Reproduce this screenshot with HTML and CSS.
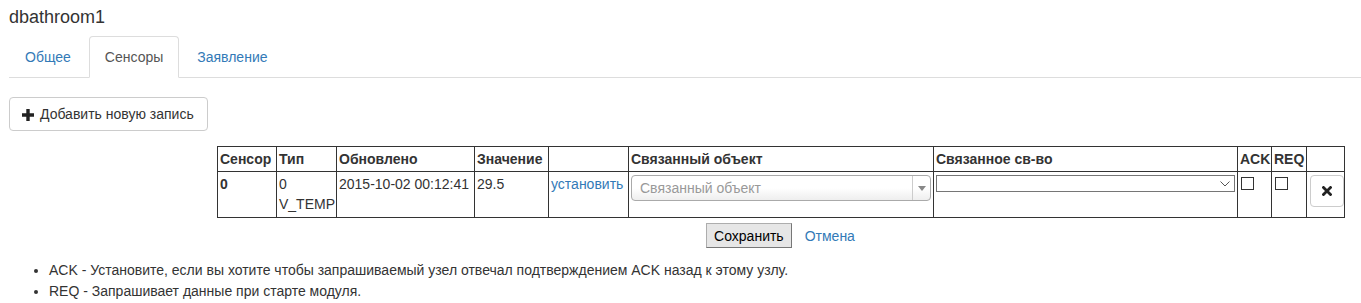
FILE: index.html
```html
<!DOCTYPE html>
<html lang="ru">
<head>
<meta charset="utf-8">
<link rel="stylesheet" href="styles.css">
</head>
<body>
<div class="page">
  <h4 class="title">dbathroom1</h4>
  <ul class="tabs">
    <li><a href="#">Общее</a></li>
    <li class="active"><a href="#">Сенсоры</a></li>
    <li><a href="#">Заявление</a></li>
  </ul>
  <div class="toolbar">
    <button class="btn add"><svg class="plus" width="12" height="12" viewBox="0 0 12 12"><path d="M4.3 0h3.4v4.3H12v3.4H7.7V12H4.3V7.7H0V4.3h4.3z" fill="#222"/></svg>Добавить новую запись</button>
  </div>
  <div class="grid-wrap">
    <table class="grid">
      <colgroup>
        <col class="c1"><col class="c2"><col class="c3"><col class="c4"><col class="c5"><col class="c6"><col class="c7"><col class="c8"><col class="c9"><col class="c10">
      </colgroup>
      <thead>
        <tr>
          <th>Сенсор</th><th>Тип</th><th>Обновлено</th><th>Значение</th><th></th><th>Связанный объект</th><th>Связанное св-во</th><th>ACK</th><th>REQ</th><th></th>
        </tr>
      </thead>
      <tbody>
        <tr>
          <td><b>0</b></td>
          <td>0<br>V_TEMP</td>
          <td>2015-10-02 00:12:41</td>
          <td>29.5</td>
          <td><a href="#">установить</a></td>
          <td><div class="s2"><span class="s2-text">Связанный объект</span><span class="s2-arrow"><i></i></span></div></td>
          <td><div class="nsel"><svg width="10" height="6" viewBox="0 0 10 6"><path d="M0.5 0.5 L5 5 L9.5 0.5" fill="none" stroke="#555" stroke-width="1"/></svg></div></td>
          <td><span class="cb"></span></td>
          <td><span class="cb"></span></td>
          <td><button class="btn del"><svg width="10" height="10" viewBox="0 0 10 10"><path d="M1.5 1.5L8.5 8.5M8.5 1.5L1.5 8.5" stroke="#222" stroke-width="2.8" stroke-linecap="square"/></svg></button></td>
        </tr>
      </tbody>
    </table>
    <div class="actions">
      <button class="save">Сохранить</button>
      <a href="#" class="cancel">Отмена</a>
    </div>
  </div>
  <ul class="notes">
    <li>ACK - Установите, если вы хотите чтобы запрашиваемый узел отвечал подтверждением ACK назад к этому узлу.</li>
    <li>REQ - Запрашивает данные при старте модуля.</li>
  </ul>
</div>
</body>
</html>
```
FILE: styles.css
```css
* { box-sizing: border-box; }
body {
  margin: 0;
  font-family: "Liberation Sans", Arial, sans-serif;
  font-size: 14px;
  line-height: 20px;
  color: #333;
  background: #fff;
}
a { color: #337ab7; text-decoration: none; }
.page { padding: 0 9px; }
.title {
  margin: 0;
  padding-top: 5px;
  font-size: 18px;
  font-weight: normal;
  line-height: 24px;
  color: #333;
  height: 36px;
}
.tabs {
  list-style: none;
  margin: 0;
  padding: 0;
  display: flex;
  border-bottom: 1px solid #ddd;
  margin-right: -9px;
}
.tabs li { margin-bottom: -1px; margin-right: 2px; }
.tabs a {
  display: block;
  padding: 10px 15px;
  line-height: 20px;
  border: 1px solid transparent;
  border-radius: 4px 4px 0 0;
}
.tabs .active a {
  color: #555;
  background: #fff;
  border-color: #ddd #ddd transparent #ddd;
}
.toolbar { padding-top: 19px; }
.btn {
  font-family: inherit;
  font-size: 14px;
  line-height: 20px;
  color: #333;
  background: #fff;
  border: 1px solid #ccc;
  border-radius: 4px;
  padding: 6px 12px;
  height: 34px;
}
.add { display: inline-flex; align-items: center; padding-right: 13px; }
.plus { margin-right: 6px; margin-top: 1px; }
.grid-wrap { margin: 15px 8px 0 208px; }
.grid {
  border-collapse: collapse;
  table-layout: fixed;
  width: 1127px;
}
.c1 { width: 59px; } .c2 { width: 60px; } .c3 { width: 138px; } .c4 { width: 74px; }
.c5 { width: 80px; } .c6 { width: 305px; } .c7 { width: 304px; } .c8 { width: 34px; }
.c9 { width: 35px; } .c10 { width: 38px; }
.grid th, .grid td {
  border: 1px solid #333;
  padding: 2px 2px;
  text-align: left;
  vertical-align: top;
  white-space: nowrap;
}
.grid th { font-weight: bold; }
.grid td { height: 46px; }
.s2 {
  display: flex;
  width: 300px;
  height: 26px;
  margin-top: 1px;
  border: 1px solid #aaa;
  border-radius: 4px;
  background: linear-gradient(#fff 0%, #fff 50%, #eee 100%);
  color: #999;
}
.s2-text { flex: 1; padding-left: 8px; line-height: 24px; }
.s2-arrow {
  width: 18px;
  border-left: 1px solid #ccc;
  display: flex;
  align-items: center;
  justify-content: center;
}
.s2-arrow i {
  width: 0; height: 0;
  border-left: 4px solid transparent;
  border-right: 4px solid transparent;
  border-top: 5px solid #888;
}
.nsel {
  margin-top: 1px;
  width: 299px;
  height: 17px;
  border: 1px solid #767676;
  display: flex;
  justify-content: flex-end;
  align-items: center;
  padding-right: 4px;
}
.cb {
  display: block;
  width: 13px;
  height: 13px;
  border: 1px solid #333;
  margin-top: 3px;
  margin-left: 1px;
}
.del {
  width: 34px;
  height: 32px;
  padding: 0;
  margin-left: 1px;
  margin-top: 1px;
  display: flex;
  align-items: center;
  justify-content: center;
}
.actions {
  display: flex;
  justify-content: center;
  align-items: center;
  gap: 13px;
  margin-top: 5px;
}
.save {
  font-family: inherit;
  font-size: 14px;
  height: 25px;
  padding: 0 7px;
  background: #e6e6e6;
  border: 1px solid #adadad;
  border-right-color: #777;
  border-bottom-color: #777;
  color: #000;
}
.notes {
  margin: 12px 0 0 0;
  padding-left: 40px;
  line-height: 21px;
}
```
